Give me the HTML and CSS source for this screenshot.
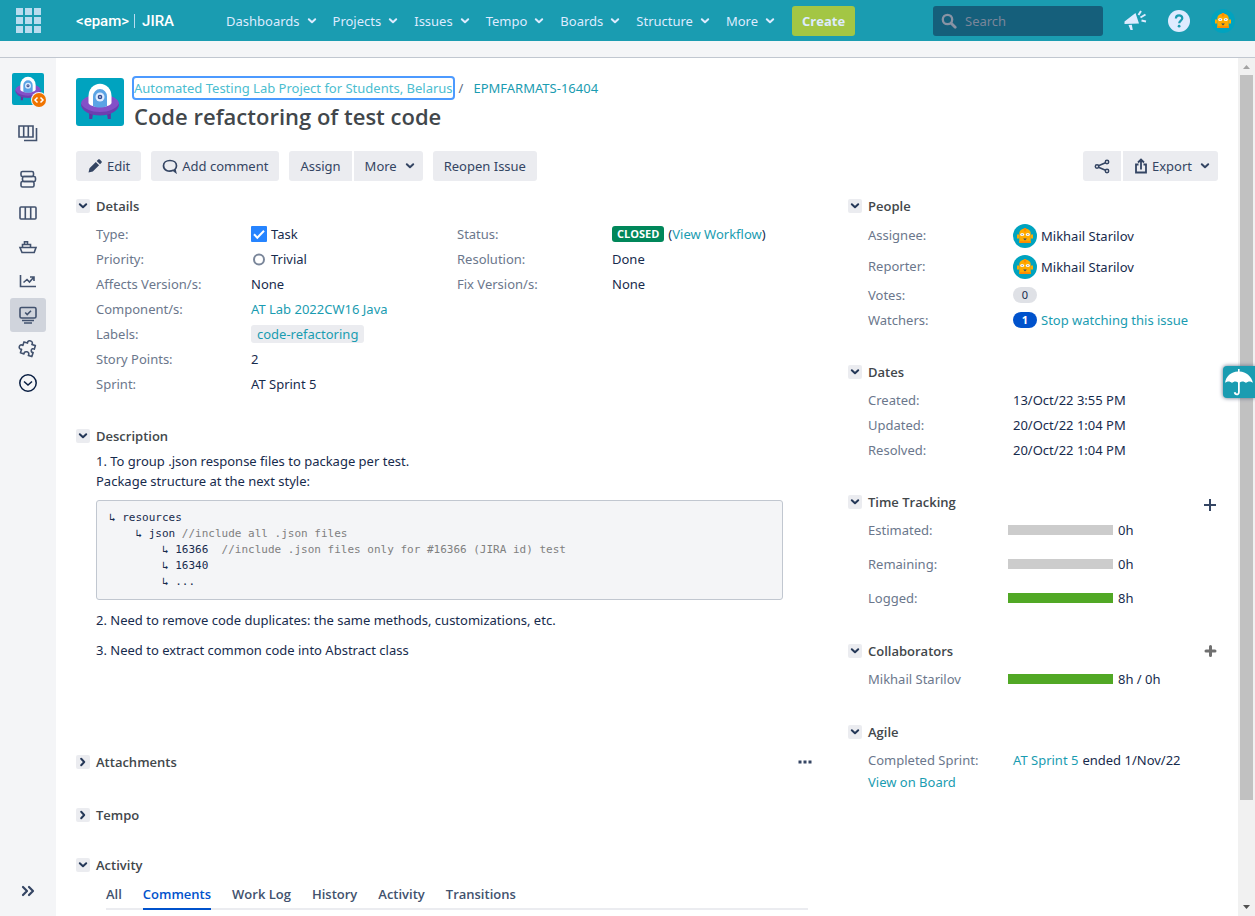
FILE: index.html
```html
<!DOCTYPE html>
<html lang="en">
<head>
<meta charset="utf-8">
<title>[EPMFARMATS-16404] Code refactoring of test code - JIRA</title>
<meta name="viewport" content="width=device-width, initial-scale=1">
<link rel="stylesheet" href="styles.css">
</head>
<body>
<svg class="sprite" aria-hidden="true">
  <symbol id="chevron" viewBox="0 0 10 10"><path d="M1.8 3.2 5 6.2 8.2 3.2" fill="none" stroke="currentColor" stroke-width="2" stroke-linecap="round" stroke-linejoin="round"/></symbol>
  <symbol id="robot" viewBox="0 0 24 24">
    <circle cx="12" cy="12" r="12" fill="#00a3bf"/>
    <path d="M6.300 19v-9.500C6.300 6.500 8.500 4.700 12 4.700s5.700 1.800 5.700 4.800V19z" fill="#ffab00"/>
    <path d="M10.800 4h2.400v3.500h-2.400z" fill="#ff8b00"/>
    <path d="M4 10.500h2.300v4H4zM17.700 10.500H20v4h-2.300z" fill="#ffab00"/>
    <path d="M6.300 17.200h11.400V19H6.300z" fill="#ff8b00"/>
    <ellipse cx="9.200" cy="10.500" rx="2" ry="1.500" fill="#fff"/><ellipse cx="14.800" cy="10.500" rx="2" ry="1.500" fill="#fff"/>
    <circle cx="9.200" cy="10.500" r=".7" fill="#8993a4"/><circle cx="14.800" cy="10.500" r=".7" fill="#8993a4"/>
    <path d="M10.200 14.500h3.600L12 16.500z" fill="#344563"/>
  </symbol>
  <symbol id="ufo" viewBox="0 0 48 48">
    <rect width="48" height="48" rx="3" fill="#00a3bf"/>
    <path d="M13.200 34h4l-1 7h-3zM30.800 34h4v7h-3z" fill="#5e35a1"/>
    <ellipse cx="24" cy="26" rx="19" ry="9.500" fill="#8450c8"/>
    <path d="M5 25.500C8 31 15 34 24 34s16-3 19-8.500C43.500 33 34 37.500 24 37.500S4.500 33 5 25.500z" fill="#6b3fb0"/>
    <path d="M12.500 25V18a11.500 12.200 0 0 1 23 0v7c-.5 2-5 4-11.500 4s-11-2-11.500-4z" fill="#fff"/>
    <path d="M17 28v-9.500a7 7.500 0 0 1 14 0V28c-4 2-10 2-14 0z" fill="#5ba4e5"/>
    <circle cx="24" cy="19" r="4.500" fill="#deebff"/><circle cx="24" cy="19" r="2.300" fill="#344b8f"/><circle cx="24" cy="19" r=".8" fill="#fff"/>
  </symbol>
</svg>

<header class="topbar">
  <button class="apps" type="button" aria-label="Linked applications">
    <svg width="25" height="25" viewBox="0 0 25 25"><path d="M0 0h7v7H0zM9 0h7v7H9zM18 0h7v7h-7zM0 9h7v7H0zM9 9h7v7H9zM18 9h7v7h-7zM0 18h7v7H0zM9 18h7v7H9zM18 18h7v7h-7z" fill="#b9dcef"/></svg>
  </button>
  <a class="logo" href="#"><span class="logo-epam">&lt;epam&gt;</span><span class="logo-bar"></span><span class="logo-jira">JIRA</span></a>
  <nav class="menu" aria-label="Main">
    <button type="button">Dashboards<svg class="caret"><use href="#chevron"/></svg></button>
    <button type="button">Projects<svg class="caret"><use href="#chevron"/></svg></button>
    <button type="button">Issues<svg class="caret"><use href="#chevron"/></svg></button>
    <button type="button">Tempo<svg class="caret"><use href="#chevron"/></svg></button>
    <button type="button">Boards<svg class="caret"><use href="#chevron"/></svg></button>
    <button type="button">Structure<svg class="caret"><use href="#chevron"/></svg></button>
    <button type="button">More<svg class="caret"><use href="#chevron"/></svg></button>
  </nav>
  <button class="create" type="button">Create</button>
  <form class="search" role="search">
    <svg width="16" height="16" viewBox="0 0 16 16"><circle cx="6.500" cy="6.500" r="4.700" fill="none" stroke="currentColor" stroke-width="2.300"/><path d="m10.200 10.200 4 4" stroke="currentColor" stroke-width="2.800" stroke-linecap="round"/></svg>
    <input type="search" placeholder="Search" aria-label="Search">
  </form>
  <div class="tools">
    <button type="button" aria-label="Feedback"><svg width="24" height="24" viewBox="0 0 24 24"><path d="M1.500 12.500 12.500 4l3.500 10.500L1.500 15zM5.500 16l3.300-.3 1 5.300H7.500z" fill="#deebff"/><path d="m15.500 6 2.500-4M17.500 8.500l5-3M18.500 11.500l4.500 1" stroke="#deebff" stroke-width="2" fill="none"/></svg></button>
    <button type="button" aria-label="Help"><svg width="22" height="22" viewBox="0 0 22 22"><circle cx="11" cy="11" r="11" fill="#deebff"/><path d="M7.900 8.600c0-2 1.300-3.200 3.200-3.200s3.200 1.100 3.200 2.800c0 2.300-3.100 2.400-3.100 5" fill="none" stroke="#1a9cb1" stroke-width="2.200"/><circle cx="11.100" cy="16.200" r="1.400" fill="#1a9cb1"/></svg></button>
    <button type="button" aria-label="User profile"><svg width="24" height="24"><use href="#robot"/></svg></button>
  </div>
</header>
<div class="strip"></div>

<div class="shell">
  <aside class="sidebar">
    <a class="project" href="#" aria-label="Project">
      <svg width="32" height="32"><use href="#ufo"/></svg>
      <svg class="badge" width="16" height="16" viewBox="0 0 16 16"><circle cx="8" cy="8" r="8" fill="#f4f5f7"/><circle cx="8" cy="8" r="7" fill="#f07400"/><path d="M6.500 5.500 4 8l2.500 2.500M9.500 5.500 12 8l-2.500 2.500" fill="none" stroke="#fff" stroke-width="1.500"/></svg>
    </a>
    <a class="side-link first" href="#" aria-label="All boards"><svg viewBox="0 0 20 20"><path d="M1 3h14v11H1zM5.700 3v11M10.300 3v11M18.500 5v12.500H6"/></svg></a>
    <a class="side-link second" href="#" aria-label="Backlog"><svg viewBox="0 0 20 20"><rect x="3" y="2.500" width="12.500" height="5" rx="1.500"/><rect x="4.500" y="7.500" width="13" height="5" rx="1.500"/><rect x="3" y="12.500" width="13" height="5.500" rx="1.500"/></svg></a>
    <a class="side-link" href="#" aria-label="Active sprints"><svg viewBox="0 0 20 20"><rect x="2" y="4" width="16" height="12" rx="1"/><path d="M7.300 4v12M12.700 4v12"/></svg></a>
    <a class="side-link" href="#" aria-label="Releases"><svg viewBox="0 0 20 20"><path d="M2 10.500h16l-1.800 5H4zM4.500 10V7.500h8V10M6.500 7V4.800h3V7"/></svg></a>
    <a class="side-link" href="#" aria-label="Reports"><svg viewBox="0 0 20 20"><path d="M2.500 4v11.500H18M5.500 11.500l3.500-3 2.500 2.500 4-4.500M12 6h4v4"/></svg></a>
    <a class="side-link active" href="#" aria-label="Issues"><svg viewBox="0 0 20 20"><rect x="2" y="2.500" width="16" height="10.500" rx="1.500"/><path d="m7.200 7.500 2 2 3.800-3.800M4 15.500h12M6 18h8"/></svg></a>
    <a class="side-link" href="#" aria-label="Components"><svg viewBox="0 0 20 20"><path transform="rotate(18 10 10)" d="M4 4.500h3.700c-1.300-4 5.900-4 4.600 0H16v3.700c-3.300-1-3.300 4.600 0 3.600V16h-3.700c1.300-4-5.900-4-4.600 0H4v-3.700c-4 1.300-4-5.300 0-4.100z" stroke-linejoin="round"/></svg></a>
    <a class="side-link dark" href="#" aria-label="More"><svg viewBox="0 0 20 20"><circle cx="10" cy="10" r="8.200"/><path d="m6 8.500 4 3.500 4-3.500"/></svg></a>
    <button class="expand" type="button" aria-label="Expand sidebar"><svg width="14" height="12" viewBox="0 0 14 12"><path d="m2 2 4 4-4 4M8 2l4 4-4 4" fill="none" stroke="currentColor" stroke-width="2.200" stroke-linecap="round" stroke-linejoin="round"/></svg></button>
  </aside>

  <main class="issue">
    <div class="issue-head">
      <svg width="48" height="48"><use href="#ufo"/></svg>
      <div>
        <div class="crumbs"><a class="focused" href="#">Automated Testing Lab Project for Students, Belarus</a><span>/</span><a href="#">EPMFARMATS-16404</a></div>
        <h1>Code refactoring of test code</h1>
      </div>
    </div>

    <div class="actions">
      <button class="btn" type="button"><svg width="16" height="16" viewBox="0 0 16 16"><path d="m1.500 14.500 1-4.300 6.300-6.300 3.300 3.300-6.300 6.300zM9.700 3l1.500-1.500c.5-.5 1.100-.5 1.600 0l1.700 1.700c.5.500.5 1.100 0 1.600L13 6.300z" fill="currentColor"/></svg>Edit</button>
      <button class="btn" type="button"><svg width="16" height="16" viewBox="0 0 16 16"><path d="M11.300 12.300c-5 2.300-9.800-.3-9.800-4.500C1.500 4.700 4.300 2.500 8 2.500s6.500 2.200 6.500 5.300c0 1.500-.6 2.700-1.600 3.700l.6 2.500z" fill="none" stroke="currentColor" stroke-width="1.700"/></svg>Add comment</button>
      <div class="group">
        <button class="btn" type="button">Assign</button>
        <button class="btn" type="button">More<svg class="caret"><use href="#chevron"/></svg></button>
      </div>
      <button class="btn" type="button">Reopen Issue</button>
      <div class="group end">
        <button class="btn" type="button" aria-label="Share"><svg width="16" height="16" viewBox="0 0 16 16" fill="none" stroke="currentColor" stroke-width="1.500"><circle cx="3" cy="8.500" r="1.700"/><circle cx="13" cy="4" r="1.700"/><circle cx="13" cy="13" r="1.700"/><path d="m4.500 7.800 7-3.100M4.500 9.200l7 3.100"/></svg></button>
        <button class="btn" type="button"><svg width="14" height="16" viewBox="0 0 14 16" fill="none" stroke="currentColor" stroke-width="1.800"><path d="M4.500 6.500H2v8h10v-8H9.500M7 11.500V2M4 4.500l3-3 3 3"/></svg>Export<svg class="caret"><use href="#chevron"/></svg></button>
      </div>
    </div>

    <div class="columns">
      <div class="primary">
        <section>
          <div class="section-head"><button class="toggle" type="button" aria-label="Toggle Details"><svg><use href="#chevron"/></svg></button><h2>Details</h2></div>
          <div class="section-body details">
            <dl>
              <dt>Type:</dt><dd><svg width="16" height="16" viewBox="0 0 16 16"><rect width="16" height="16" rx="1" fill="#2684ff"/><path d="m3 8.300 3.300 3.400L13 4.700" fill="none" stroke="#fff" stroke-width="2"/></svg>Task</dd>
              <dt>Priority:</dt><dd><svg width="16" height="16" viewBox="0 0 16 16"><circle cx="8" cy="8.500" r="5" fill="none" stroke="#7a869a" stroke-width="2"/></svg>Trivial</dd>
              <dt>Affects Version/s:</dt><dd>None</dd>
              <dt>Component/s:</dt><dd><a href="#">AT Lab 2022CW16 Java</a></dd>
              <dt>Labels:</dt><dd><a class="label" href="#">code-refactoring</a></dd>
              <dt>Story Points:</dt><dd>2</dd>
              <dt>Sprint:</dt><dd>AT Sprint 5</dd>
            </dl>
            <dl>
              <dt>Status:</dt><dd><span class="status">CLOSED</span><span>(<a href="#">View Workflow</a>)</span></dd>
              <dt>Resolution:</dt><dd>Done</dd>
              <dt>Fix Version/s:</dt><dd>None</dd>
            </dl>
          </div>
        </section>
        <section class="description">
          <div class="section-head"><button class="toggle" type="button" aria-label="Toggle Description"><svg><use href="#chevron"/></svg></button><h2>Description</h2></div>
          <div class="section-body">
            <p>1. To group .json response files to package per test.<br>Package structure at the next style:</p>
<pre>↳ resources
    ↳ json <i>//include all .json files</i>
        ↳ 16366  <i>//include .json files only for #16366 (JIRA id) test</i>
        ↳ 16340
        ↳ ...</pre>
            <p>2. Need to remove code duplicates: the same methods, customizations, etc.</p>
            <p>3. Need to extract common code into Abstract class</p>
          </div>
        </section>
        <section class="attachments">
          <div class="section-head"><button class="toggle closed" type="button" aria-label="Toggle Attachments"><svg><use href="#chevron"/></svg></button><h2>Attachments</h2>
            <button class="extra dots" type="button" aria-label="Attachment options"><svg width="14" height="4" viewBox="0 0 14 4"><path d="M.5.500h3v3h-3zM5.500.500h3v3h-3zM10.500.500h3v3h-3z" fill="currentColor"/></svg></button></div>
        </section>
        <section>
          <div class="section-head"><button class="toggle closed" type="button" aria-label="Toggle Tempo"><svg><use href="#chevron"/></svg></button><h2>Tempo</h2></div>
        </section>
        <section>
          <div class="section-head"><button class="toggle" type="button" aria-label="Toggle Activity"><svg><use href="#chevron"/></svg></button><h2>Activity</h2></div>
          <div class="tabs" role="tablist">
            <button type="button" role="tab">All</button>
            <button type="button" role="tab" aria-selected="true">Comments</button>
            <button type="button" role="tab">Work Log</button>
            <button type="button" role="tab">History</button>
            <button type="button" role="tab">Activity</button>
            <button type="button" role="tab">Transitions</button>
          </div>
        </section>
      </div>

      <div class="secondary">
        <section>
          <div class="section-head"><button class="toggle" type="button" aria-label="Toggle People"><svg><use href="#chevron"/></svg></button><h2>People</h2></div>
          <dl class="section-body people">
            <dt class="tall">Assignee:</dt><dd><svg width="24" height="24"><use href="#robot"/></svg>Mikhail Starilov</dd>
            <dt class="tall">Reporter:</dt><dd><svg width="24" height="24"><use href="#robot"/></svg>Mikhail Starilov</dd>
            <dt>Votes:</dt><dd><span class="count">0</span></dd>
            <dt>Watchers:</dt><dd><span class="count on">1</span><a href="#">Stop watching this issue</a></dd>
          </dl>
        </section>
        <section>
          <div class="section-head"><button class="toggle" type="button" aria-label="Toggle Dates"><svg><use href="#chevron"/></svg></button><h2>Dates</h2></div>
          <dl class="section-body">
            <dt>Created:</dt><dd>13/Oct/22 3:55 PM</dd>
            <dt>Updated:</dt><dd>20/Oct/22 1:04 PM</dd>
            <dt>Resolved:</dt><dd>20/Oct/22 1:04 PM</dd>
          </dl>
        </section>
        <section>
          <div class="section-head"><button class="toggle" type="button" aria-label="Toggle Time Tracking"><svg><use href="#chevron"/></svg></button><h2>Time Tracking</h2>
            <button class="extra" type="button" aria-label="Log work"><svg width="16" height="16" viewBox="0 0 16 16"><path d="M8 5v12M2 11h12" stroke="#344563" stroke-width="2"/></svg></button></div>
          <dl class="section-body bars">
            <dt>Estimated:</dt><dd><span class="bar"></span>0h</dd>
            <dt>Remaining:</dt><dd><span class="bar"></span>0h</dd>
            <dt>Logged:</dt><dd><span class="bar done"></span>8h</dd>
          </dl>
        </section>
        <section>
          <div class="section-head"><button class="toggle" type="button" aria-label="Toggle Collaborators"><svg><use href="#chevron"/></svg></button><h2>Collaborators</h2>
            <button class="extra" type="button" aria-label="Add collaborator"><svg width="16" height="16" viewBox="0 0 16 16"><path d="M8.500 3.500v9M4 8h9" stroke="#707070" stroke-width="3" stroke-linecap="round"/></svg></button></div>
          <dl class="section-body bars">
            <dt>Mikhail Starilov</dt><dd><span class="bar done"></span>8h / 0h</dd>
          </dl>
        </section>
        <section>
          <div class="section-head"><button class="toggle" type="button" aria-label="Toggle Agile"><svg><use href="#chevron"/></svg></button><h2>Agile</h2></div>
          <dl class="section-body">
            <dt>Completed Sprint:</dt><dd><a href="#">AT Sprint 5</a> ended 1/Nov/22</dd>
          </dl>
          <a class="board-link" href="#">View on Board</a>
        </section>
      </div>
    </div>
  </main>

  <div class="scrollbar" aria-hidden="true">
    <svg width="17" height="17" viewBox="0 0 17 17"><path d="M5 11h7L8.500 7z" fill="#a3a3a3"/></svg>
    <div class="track"><div class="thumb"></div></div>
    <svg width="17" height="17" viewBox="0 0 17 17"><path d="M5 6h7l-3.500 4z" fill="#505050"/></svg>
  </div>
</div>

<button class="umbrella" type="button" aria-label="Send feedback"><svg width="30" height="28" viewBox="0 0 30 28"><path d="M1 15C2 8 7 4 14 3.500V1h1.600v2.500C22 4 27.500 8 29 15c-2-2-5-2-7 0-2-2-4.500-2-6.200-.5V24c0 4.500-6 4.300-6 .3h2.200c0 1.700 2 1.700 2 0v-9.800C12 13 10 13 8 15c-2-2-5-2-7 0z" fill="#fff"/></svg></button>
</body>
</html>
```

FILE: styles.css
```css
* { box-sizing: border-box; }

body {
  margin: 0;
  height: 100vh;
  overflow: hidden;
  display: flex;
  flex-direction: column;
  font: 13px/20px "Noto Sans", "Open Sans", sans-serif;
  color: #172b4d;
  background: #fff;
}

button {
  margin: 0;
  padding: 0;
  border: 0;
  background: none;
  font: inherit;
  color: inherit;
  cursor: pointer;
}

a { color: #1a9cb1; text-decoration: none; }
h1, h2, p, dl, dd, pre { margin: 0; }
svg { flex: none; }
.sprite { display: none; }
.caret { width: 10px; height: 10px; }

/* Top bar */
.topbar {
  flex: none;
  height: 41px;
  padding: 0 20px 0 16px;
  display: flex;
  align-items: center;
  background: #1a9cb1;
  color: #deebff;
}
.apps { display: flex; }
.logo {
  margin-left: 35px;
  width: 150px;
  display: flex;
  align-items: center;
  color: #fff;
  font: 500 15px/20px Roboto, "Liberation Sans", sans-serif;
}
.logo-bar { width: 1px; height: 14px; margin: 0 7px 0 5px; background: #b9dcef; }
.menu { display: flex; gap: 16px; }
.menu button { display: flex; align-items: center; gap: 7px; }
.create {
  margin-left: 17px;
  height: 30px;
  padding: 0 10px;
  border-radius: 3px;
  background: #a3c644;
  font-family: "Open Sans", sans-serif;
  font-weight: 700;
}
.search {
  margin-left: auto;
  width: 170px;
  height: 30px;
  padding: 0 8px;
  display: flex;
  align-items: center;
  gap: 8px;
  border-radius: 3px;
  background: #155f7b;
  color: #8993a4;
}
.search input {
  flex: 1;
  min-width: 0;
  padding: 0;
  border: 0;
  background: none;
  font: inherit;
  color: #deebff;
}
.search input::placeholder { color: #7a869a; opacity: 1; }
.tools { margin-left: 20px; display: flex; align-items: center; gap: 21px; }
.tools button { display: flex; }

.strip { flex: none; height: 17px; background: #f4f5f7; border-bottom: 1px solid #c1c7d0; }

.shell { flex: 1; min-height: 0; display: flex; }

/* Sidebar */
.sidebar {
  flex: none;
  width: 56px;
  padding: 15px 0;
  display: flex;
  flex-direction: column;
  align-items: center;
  background: #f4f5f7;
}
.project { position: relative; display: flex; }
.badge { position: absolute; right: -3px; bottom: -3px; }
.side-link {
  width: 36px;
  height: 34px;
  display: flex;
  align-items: center;
  justify-content: center;
  border-radius: 3px;
  color: #42526e;
}
.side-link svg { width: 20px; height: 20px; fill: none; stroke: currentColor; stroke-width: 1.6; }
.side-link.first { margin-top: 11px; }
.side-link.second { margin-top: 12px; }
.side-link.active { background: #d0d4dc; }
.side-link.dark { color: #091e42; }
.side-link.dark svg { stroke-width: 1.5; }
.expand { margin-top: auto; padding: 4px; display: flex; color: #344563; }

/* Issue */
.issue { flex: 1; min-width: 0; padding: 20px 20px 0; overflow: hidden; }
.issue-head { display: flex; gap: 10px; }
.crumbs { display: flex; height: 20px; }
.crumbs span { margin: 0 10px 0 6px; color: #5e6c84; }
.focused { color: #4bbdd0; border-radius: 2px; outline: 2px solid #4c9aff; }
h1 { font-family: "Open Sans", sans-serif; font-size: 22px; line-height: 28px; font-weight: 600; color: #42474b; margin-top: 4px; }

.actions { margin-top: 21px; display: flex; gap: 10px; }
.btn {
  height: 30px;
  padding: 0 11px;
  display: flex;
  align-items: center;
  gap: 4px;
  border-radius: 3px;
  background: #ebecf0;
  color: #344563;
}
.btn .caret { margin-left: 4px; margin-right: -3px; }
.group { display: flex; gap: 2px; }
.group .btn:first-child { border-radius: 3px 0 0 3px; }
.group .btn:last-child { border-radius: 0 3px 3px 0; }
.end { margin-left: auto; }

.columns {
  margin-top: 15px;
  display: grid;
  grid-template-columns: minmax(0, 2fr) minmax(0, 1fr);
  gap: 32px;
}
.primary { padding-right: 8px; }
section + section { margin-top: 30px; }
.description { min-height: 296px; }
.attachments { min-height: 23px; }
.section-head { height: 20px; display: flex; align-items: center; gap: 6px; }
h2 { font-family: "Open Sans", sans-serif; font-size: 13px; line-height: 20px; font-weight: 600; color: #42474b; }
.toggle {
  width: 14px;
  height: 14px;
  display: flex;
  align-items: center;
  justify-content: center;
  border-radius: 2px;
  background: #ebecf0;
  color: #253858;
}
.toggle svg { width: 10px; height: 10px; }
.toggle.closed svg { transform: rotate(-90deg); }
.extra { margin-left: auto; display: flex; color: #344563; }
.extra svg { overflow: visible; }
.dots { margin-right: -4px; }

.section-body { margin: 5px 0 0 20px; }
.section-body.people { margin-top: 4px; }
.details { display: grid; grid-template-columns: 1fr 1fr; gap: 10px; }
dl {
  display: grid;
  grid-template-columns: 155px 1fr;
  grid-auto-rows: minmax(25px, auto);
  align-items: center;
  align-content: start;
}
.secondary dl { grid-template-columns: 145px 1fr; }
dt { color: #6b778c; }
dt.tall { line-height: 31px; }
dd { display: flex; align-items: center; gap: 4px; white-space: nowrap; }
.label { padding: 0 6px; line-height: 18px; border-radius: 3px; background: #ebecf0; }
.status {
  padding: 0 5px;
  border-radius: 3px;
  background: #00875a;
  color: #fff;
  font-family: "Open Sans", sans-serif;
  font-size: 11px;
  line-height: 16px;
  font-weight: 700;
}
.count {
  width: 24px;
  border-radius: 8px;
  background: #dfe1e6;
  font-size: 11px;
  line-height: 16px;
  text-align: center;
}
.count.on { background: #0052cc; color: #fff; font-weight: 700; }
.secondary .bars { grid-template-columns: 140px 1fr; grid-auto-rows: 26px; row-gap: 8px; }
.bars dd { gap: 5px; }
.bar { width: 105px; height: 10px; background: #ccc; }
.bar.done { background: #51a825; }
.board-link { display: block; margin-left: 20px; }

pre {
  margin: 9px 25px 10px 0;
  padding: 9px 12px;
  border: 1px solid #c1c7d0;
  border-radius: 3px;
  background: #f4f5f7;
  font: 11px/16px "DejaVu Sans Mono", "Liberation Mono", monospace;
  overflow: hidden;
}
pre i { font-style: normal; color: #808080; }
p + p { margin-top: 10px; }

.tabs {
  margin: 5px 0 0 30px;
  height: 30px;
  display: flex;
  gap: 21px;
  border-bottom: 2px solid #ebecf0;
  font-family: "Open Sans", sans-serif;
  font-weight: 600;
  color: #42526e;
}
.tabs button { height: 30px; border-bottom: 2px solid transparent; }
.tabs [aria-selected="true"] { color: #0052cc; border-color: #0052cc; }

/* Scrollbar */
.scrollbar { flex: none; width: 17px; display: flex; flex-direction: column; background: #f1f1f1; }
.track { flex: 1; padding: 0 2px; }
.thumb { height: 88%; background: #c1c1c1; }

.umbrella {
  position: fixed;
  right: 0;
  top: 366px;
  width: 32px;
  height: 32px;
  display: flex;
  align-items: center;
  justify-content: center;
  border-radius: 4px 0 0 4px;
  background: #1a9cb1;
  box-shadow: 0 0 4px #5e6c84;
}
```
